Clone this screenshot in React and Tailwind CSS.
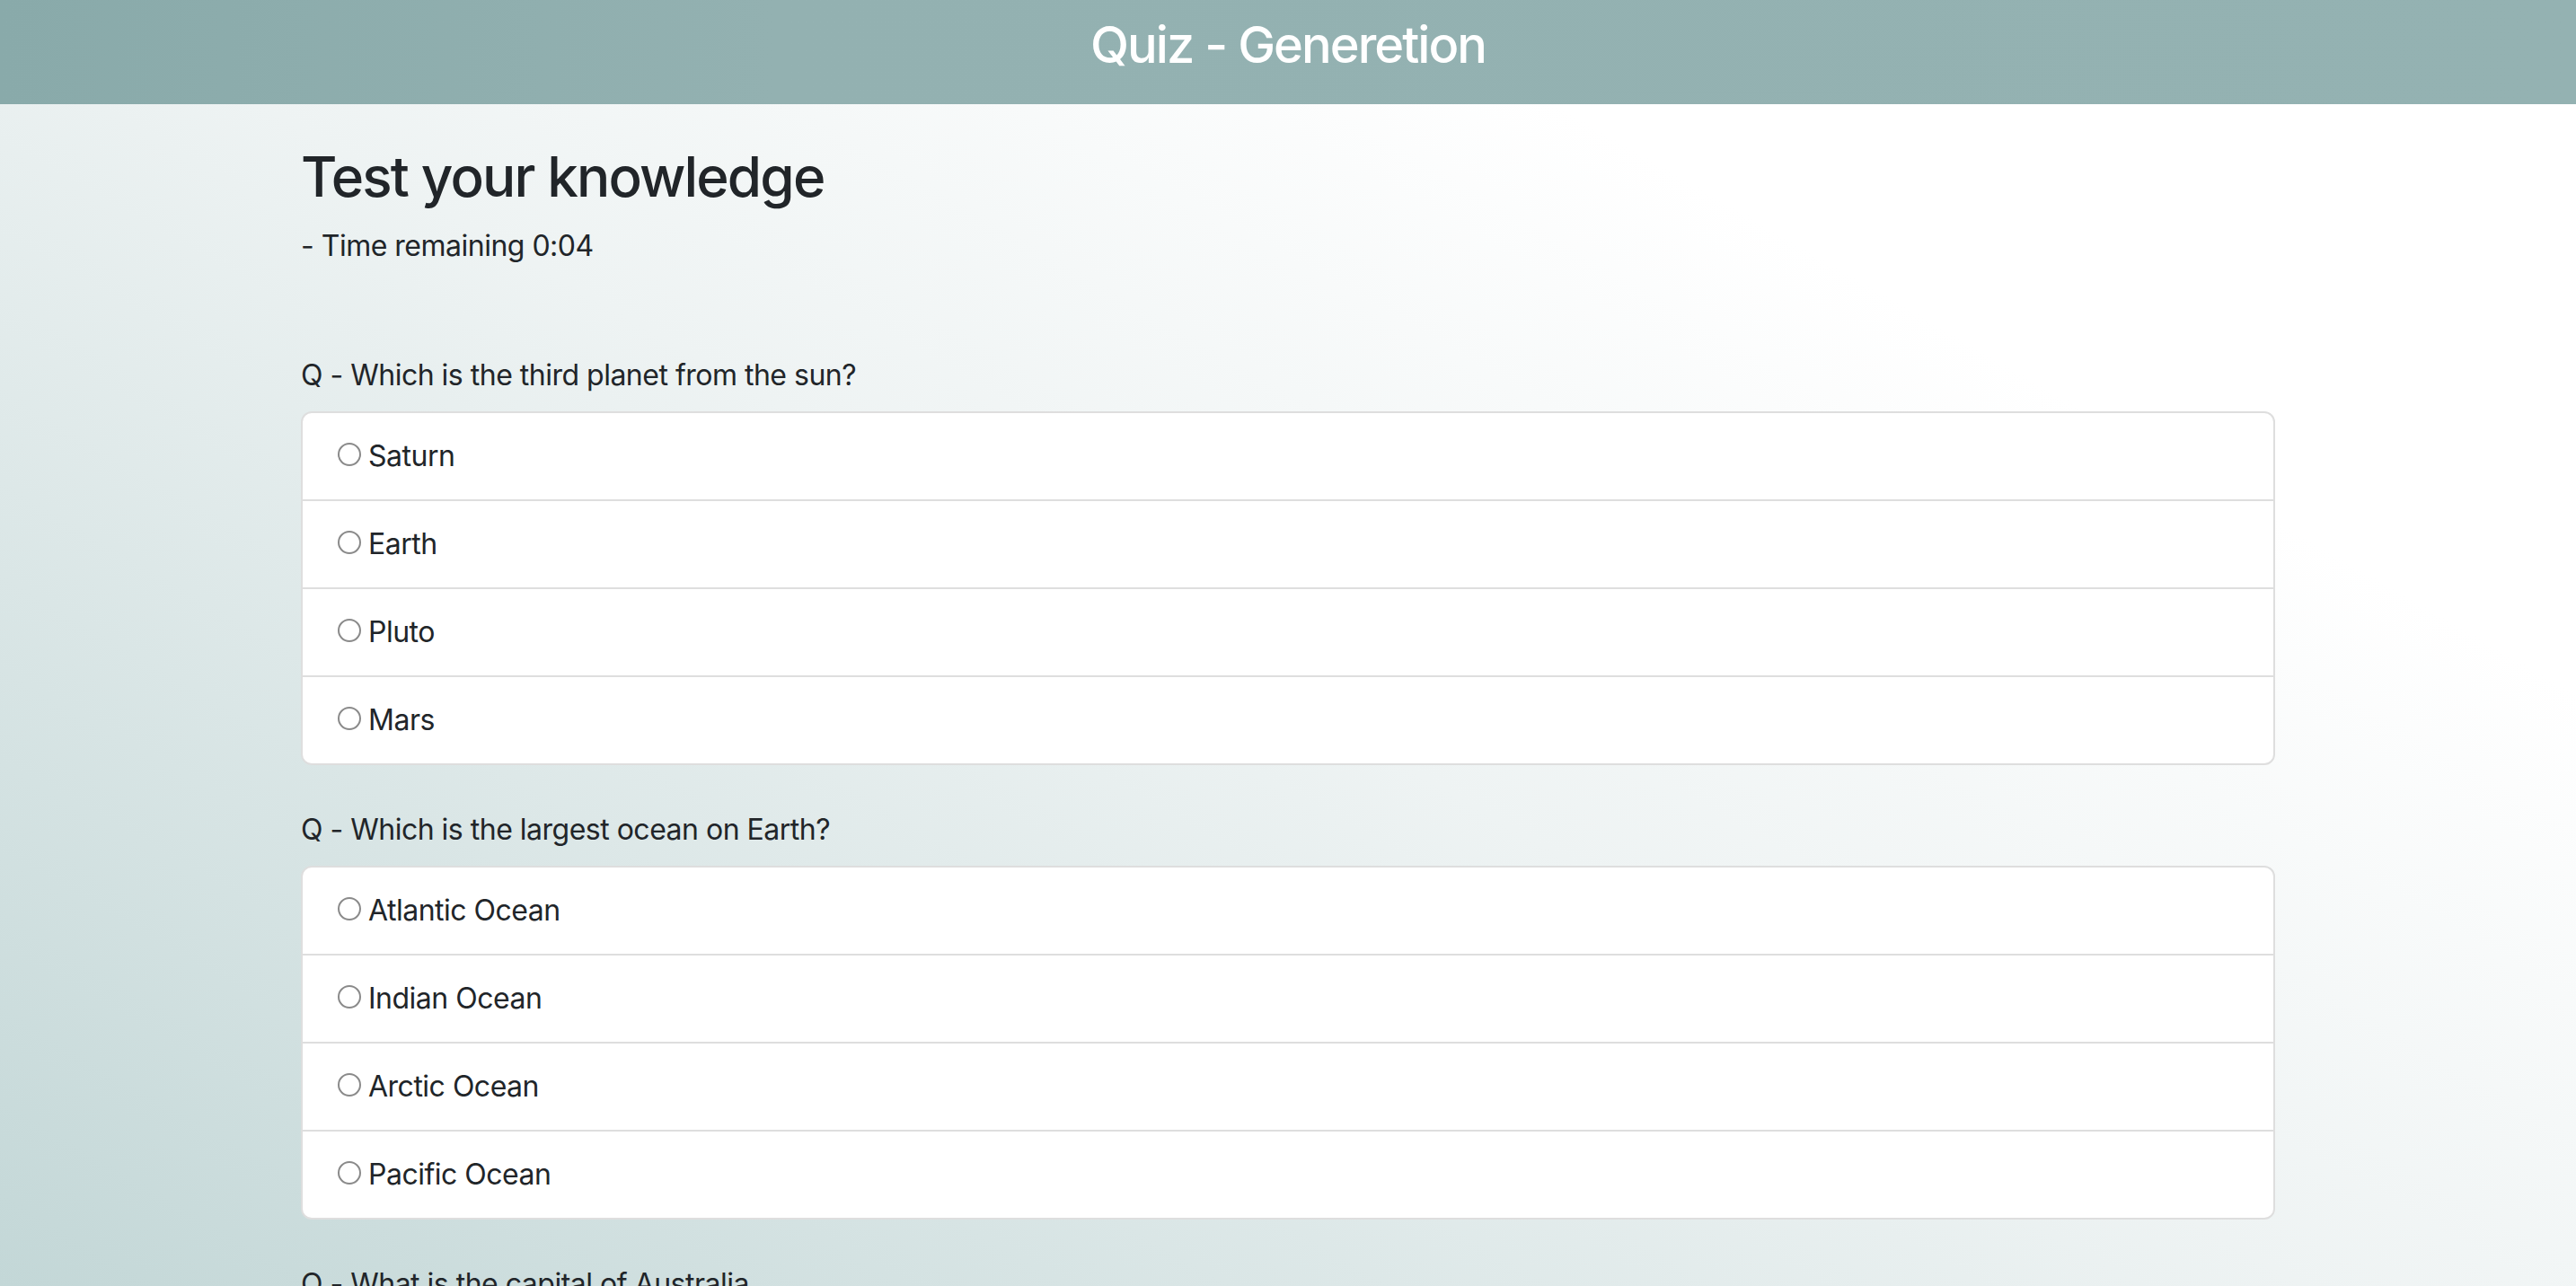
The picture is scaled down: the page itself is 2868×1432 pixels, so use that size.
const questions = [
  {
    q: 'Which is the third planet from the sun?',
    options: ['Saturn', 'Earth', 'Pluto', 'Mars'],
  },
  {
    q: 'Which is the largest ocean on Earth?',
    options: ['Atlantic Ocean', 'Indian Ocean', 'Arctic Ocean', 'Pacific Ocean'],
  },
  {
    q: 'What is the capital of Australia',
    options: ['Sydney', 'Canberra', 'Melbourne', 'Perth'],
  },
];

function Question({ q, options, index }) {
  return (
    <div>
      <p className="text-[32px] leading-[48px] tracking-[-0.5px] mb-[16px]">Q - {q}</p>
      <ul className="bg-white border-2 border-[#dedede] rounded-[12px] overflow-hidden">
        {options.map((opt, i) => (
          <li
            key={opt}
            className={`py-[24px] flex items-center px-[32px] ${i > 0 ? 'border-t-2 border-[#dedede]' : ''}`}
          >
            <label className="flex items-center">
              <input
                type="radio"
                name={`q${index}`}
                className="appearance-none w-[26px] h-[26px] rounded-full border-2 border-[#8a8a8a] bg-white ml-[7px] mr-[8px] -mt-[4px]"
              />
              <span className="text-[32px] leading-[48px] tracking-[-0.5px]">{opt}</span>
            </label>
          </li>
        ))}
      </ul>
    </div>
  );
}

export default function App() {
  return (
    <div className="min-h-screen [font-family:Inter,sans-serif] text-[#212529] bg-fixed bg-[linear-gradient(30deg,#c3d7d7_0%,#eef3f3_48%,#ffffff_75%)]">
      <header className="h-[116px] pt-[17px] text-center bg-[linear-gradient(90deg,#89aaaa_0%,#93b1b1_30%,#94b2b2_100%)]">
        <h1 className="text-[56px] leading-[1.2] font-medium tracking-[-0.035em] text-white">Quiz - Generetion</h1>
      </header>

      <main className="w-[2198px] mx-auto pt-[44px] pb-[80px]">
        <h2 className="text-[62px] leading-[1.2] font-medium tracking-[-0.03em] mb-[16px]">Test your knowledge</h2>
        <p className="text-[32px] leading-[48px] tracking-[-0.5px]">- Time remaining 0:04</p>

        <div className="mt-[96px] flex flex-col gap-[48px]">
          {questions.map((item, i) => (
            <Question key={i} index={i} q={item.q} options={item.options} />
          ))}
        </div>
      </main>
    </div>
  );
}
